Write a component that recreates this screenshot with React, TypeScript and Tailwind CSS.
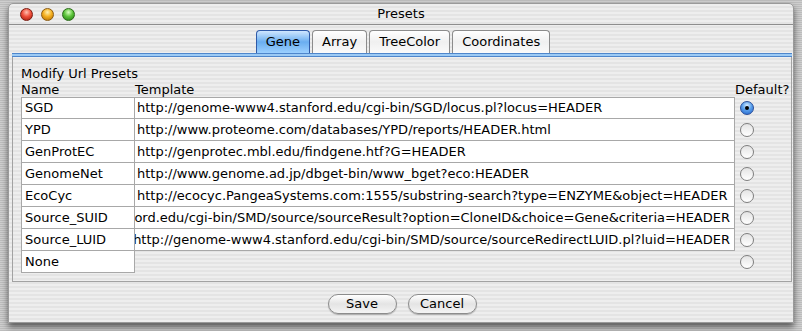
const presets = [
  { name: "SGD", url: "http://genome-www4.stanford.edu/cgi-bin/SGD/locus.pl?locus=HEADER" },
  { name: "YPD", url: "http://www.proteome.com/databases/YPD/reports/HEADER.html" },
  { name: "GenProtEC", url: "http://genprotec.mbl.edu/findgene.htf?G=HEADER" },
  { name: "GenomeNet", url: "http://www.genome.ad.jp/dbget-bin/www_bget?eco:HEADER" },
  { name: "EcoCyc", url: "http://ecocyc.PangeaSystems.com:1555/substring-search?type=ENZYME&object=HEADER" },
  {
    name: "Source_SUID",
    url: "http://genome-www4.stanford.edu/cgi-bin/SMD/source/sourceResult?option=CloneID&choice=Gene&criteria=HEADER",
    clipped: true,
  },
  {
    name: "Source_LUID",
    url: "http://genome-www4.stanford.edu/cgi-bin/SMD/source/sourceRedirectLUID.pl?luid=HEADER",
    clipped: true,
  },
  { name: "None" },
];

const tabs = ["Gene", "Array", "TreeColor", "Coordinates"];

function Light({ color }: { color: "red" | "yellow" | "green" }) {
  const fills = {
    red: "bg-[radial-gradient(circle_at_50%_30%,#ffc0b0_0%,#f0503c_45%,#a01808_100%)] border-[#7a1a10]",
    yellow: "bg-[radial-gradient(circle_at_50%_30%,#fff0b0_0%,#f5b020_45%,#b06a00_100%)] border-[#8a5a10]",
    green: "bg-[radial-gradient(circle_at_50%_30%,#d8ffc0_0%,#5cc43a_45%,#1d7a10_100%)] border-[#2a6a18]",
  };
  return <div className={`w-[13px] h-[13px] rounded-full border ${fills[color]}`} />;
}

function Radio({ checked }: { checked?: boolean }) {
  if (checked) {
    return (
      <div className="w-[14px] h-[14px] rounded-full border border-[#2a4f9a] bg-[radial-gradient(circle_at_50%_30%,#d8ecff_0%,#5aa0ec_45%,#1f5fc8_100%)] flex items-center justify-center">
        <div className="w-[4px] h-[4px] rounded-full bg-black" />
      </div>
    );
  }
  return <div className="w-[14px] h-[14px] rounded-full border border-[#7e7e7e] bg-[linear-gradient(#e4e4e4,#ffffff)]" />;
}

function AquaButton({ label }: { label: string }) {
  return (
    <div className="w-[69px] h-[20px] rounded-full border border-[#8c8c8c] bg-[linear-gradient(#ffffff,#e4e4e4_50%,#f4f4f4)] shadow-[0_1px_1px_rgba(0,0,0,0.25)] flex items-center justify-center text-[13px] text-black">
      {label}
    </div>
  );
}

export default function App() {
  return (
    <div
      className="w-[802px] h-[331px] overflow-hidden bg-[repeating-linear-gradient(0deg,#bdbdbd_0px,#bdbdbd_1px,#cfcfcf_1px,#cfcfcf_2px)] pt-[3px] pl-[8px]"
      style={{ fontFamily: '"DejaVu Sans", "Noto Sans", sans-serif' }}
    >
      <div className="w-[786px] h-[320px] flex flex-col bg-[repeating-linear-gradient(0deg,#eeeeee_0px,#eeeeee_2px,#e4e4e4_2px,#e4e4e4_4px)] border border-[#9a9a9a] rounded-t-[5px] shadow-[0_4px_6px_rgba(0,0,0,0.55)]">
        {/* Title bar */}
        <div className="h-[21px] shrink-0 flex items-center border-b border-[#8e8e8e] relative">
          <div className="flex items-center gap-[8px] pl-[11px]">
            <Light color="red" />
            <Light color="yellow" />
            <Light color="green" />
          </div>
          <div className="absolute inset-0 flex items-center justify-center text-[13px] text-black">
            Presets
          </div>
        </div>

        {/* Tabs */}
        <div className="flex justify-center gap-[2px] mt-[5px] h-[23px] shrink-0 pl-[4px]">
          {tabs.map((t, i) => (
            <div
              key={t}
              className={
                i === 0
                  ? "h-[23px] px-[9px] flex items-center rounded-t-[4px] border border-b-0 border-[#2f5aa8] bg-[linear-gradient(#cfe6ff,#6aaef0_50%,#9cd0ff)] text-[13px] text-black"
                  : "h-[23px] px-[9px] flex items-center rounded-t-[4px] border border-b-0 border-[#8c8c8c] bg-[linear-gradient(#ffffff,#f0f0f0_50%,#fafafa)] text-[13px] text-black"
              }
            >
              {t}
            </div>
          ))}
        </div>
        <div className="h-[4px] shrink-0 ml-[3px] mr-[1px] border-y border-[#4e86cc] bg-[#9ccaf4]" />

        {/* Panel */}
        <div className="h-[225px] shrink-0 ml-[3px] mr-[1px] border-x border-b border-[#a2a2a2] pl-[8px] pt-[9px] text-[13px] text-black">
          <div className="leading-[16px]">Modify Url Presets</div>
          <div className="flex leading-[15px] h-[15px]">
            <div className="w-[114px]">Name</div>
            <div className="w-[600px]">Template</div>
            <div>Default?</div>
          </div>
          <div className="flex flex-col">
            {presets.map((p, i) => (
              <div key={p.name} className="flex h-[22px] items-center">
                <div
                  className={`w-[114px] h-[22px] bg-white border-l border-b border-r border-[#a8a8a8] pl-[3px] flex items-center ${
                    i === 0 ? "border-t" : ""
                  }`}
                >
                  {p.name}
                </div>
                {p.url ? (
                  <div
                    className={`w-[600px] h-[22px] bg-white border-b border-r border-[#a8a8a8] flex items-center overflow-hidden ${
                      i === 0 ? "border-t" : ""
                    } ${p.clipped ? "justify-end pr-[4px]" : "pl-[2px]"}`}
                  >
                    <span className="whitespace-nowrap">{p.url}</span>
                  </div>
                ) : (
                  <div className="w-[600px]" />
                )}
                <div className="ml-[5px]">
                  <Radio checked={i === 0} />
                </div>
              </div>
            ))}
          </div>
        </div>

        {/* Buttons */}
        <div className="flex justify-center gap-[11px] mt-[12px] pl-[2px]">
          <AquaButton label="Save" />
          <AquaButton label="Cancel" />
        </div>
      </div>
    </div>
  );
}
